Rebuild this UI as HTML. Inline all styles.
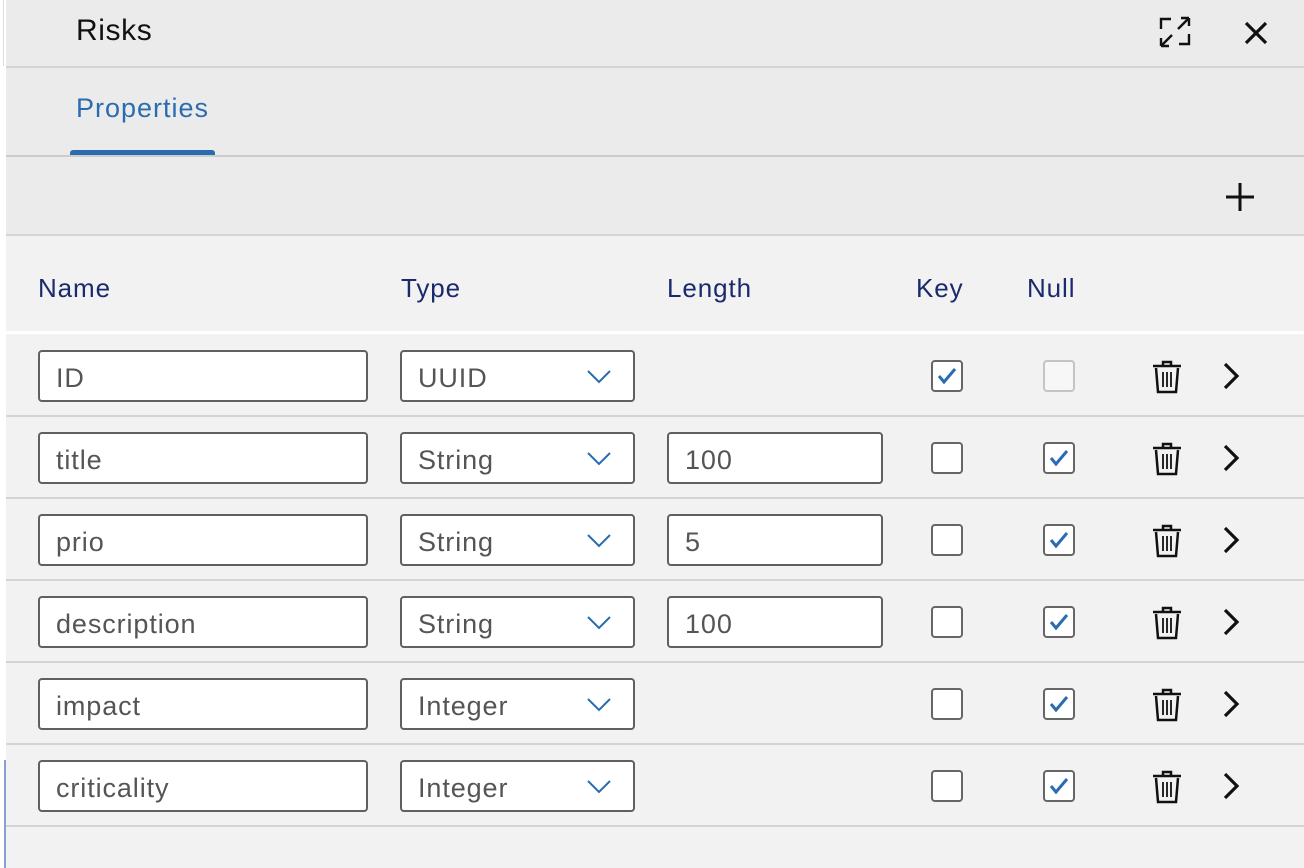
<!DOCTYPE html>
<html><head><meta charset="utf-8"><style>
*{margin:0;padding:0;box-sizing:border-box}
body{width:1304px;height:868px;background:#f2f2f2;font-family:"Liberation Sans",Arial,sans-serif;position:relative;overflow:hidden}
.a{position:absolute}
.inp{position:absolute;height:52px;border:2px solid #606060;border-radius:4px;background:#fff;font-size:27px;letter-spacing:0.9px;color:#555;padding-left:16px;line-height:52px}
.cb{position:absolute;width:32px;height:32px;border:2px solid #666;border-radius:4px;background:#fff}
.hd{position:absolute;top:273px;font-size:26px;letter-spacing:0.9px;color:#1a2a6c}
.ln{position:absolute;left:6px;right:0;height:2px;background:#d4d4d4}
</style></head><body>
<div class="a" style="left:0;top:0;width:6px;height:868px;background:#fff"></div>
<div class="a" style="left:0;top:0;width:4px;height:66px;border-right:1px solid #d8dde6"></div>
<div class="a" style="left:6px;top:0;right:0;height:156px;background:#ebebeb"></div>
<div class="a" style="left:76px;top:14px;font-size:30px;letter-spacing:0.6px;color:#111">Risks</div>
<svg class="a" style="left:1158px;top:15px" width="34" height="34" viewBox="0 0 34 34" fill="none" stroke="#111" stroke-width="2.4"><path d="M3 14V4h10M21 29h10V19M20 14L31 3M31 3h-8M31 3v8M14 20L3 31M3 31h8M3 31v-8"/></svg>
<svg class="a" style="left:1244px;top:21px" width="24" height="24" viewBox="0 0 24 24" stroke="#111" stroke-width="3.2"><path d="M2 2L22 22M22 2L2 22"/></svg>
<div class="ln" style="top:66px"></div>
<div class="a" style="left:76px;top:93px;font-size:27px;letter-spacing:1px;color:#2b6cb0">Properties</div>
<div class="a" style="left:70px;top:150px;width:145px;height:6px;background:#2b6cb0;border-radius:3px 3px 0 0"></div>
<div class="a" style="left:6px;right:0;top:155px;height:2px;background:#ccc;box-shadow:0 2px 3px rgba(0,0,0,.08)"></div>
<div class="a" style="left:6px;right:0;top:157px;height:78px;background:#ebebeb"></div>
<svg class="a" style="left:1225px;top:182px" width="30" height="30" viewBox="0 0 30 30" stroke="#111" stroke-width="3"><path d="M15 1V29M1 15H29"/></svg>
<div class="ln" style="top:234px"></div>
<div class="hd" style="left:38px">Name</div>
<div class="hd" style="left:401px">Type</div>
<div class="hd" style="left:667px">Length</div>
<div class="hd" style="left:916px">Key</div>
<div class="hd" style="left:1027px">Null</div>
<div class="a" style="left:6px;right:0;top:331px;height:3px;background:#fff"></div>
<div id="rows"></div>
<script>
const rows=[["ID","UUID","",1,0],["title","String","100",0,1],["prio","String","5",0,1],["description","String","100",0,1],["impact","Integer","",0,1],["criticality","Integer","",0,1]];
let h="";
const chk='<svg width="28" height="28" viewBox="0 0 28 28" style="position:absolute;left:0;top:0"><path d="M6 14l5 6L22 7" fill="none" stroke="#2b6cb0" stroke-width="3"/></svg>';
rows.forEach((r,i)=>{const t=334+i*82;
h+=`<div class="inp" style="left:38px;top:${t+16}px;width:330px">${r[0]}</div>`;
h+=`<div class="inp" style="left:400px;top:${t+16}px;width:235px">${r[1]}<svg style="position:absolute;right:22px;top:18px" width="24" height="14" viewBox="0 0 24 14"><path d="M1 1l11 11L23 1" fill="none" stroke="#2b6cb0" stroke-width="2"/></svg></div>`;
if(r[2])h+=`<div class="inp" style="left:667px;top:${t+16}px;width:216px">${r[2]}</div>`;
h+=`<div class="cb" style="left:931px;top:${t+26}px">${r[3]?chk:""}</div>`;
h+=`<div class="cb" style="left:1043px;top:${t+26}px;${i==0?'border-color:#c4c4c4;background:#f7f7f7':''}">${r[4]?chk:""}</div>`;
h+=`<svg class="a" style="left:1152px;top:${t+26}px" width="30" height="34" viewBox="0 0 30 34" fill="none" stroke="#111"><path d="M1 6H29" stroke-width="2.5"/><path d="M11 5V2h8v3" stroke-width="2.5"/><path d="M4 8l2 24h18l2-24" stroke-width="2.5"/><path d="M11 12v15M15 12v15M19 12v15" stroke-width="1.8"/></svg>`;
h+=`<svg class="a" style="left:1222px;top:${t+28}px" width="18" height="28" viewBox="0 0 18 28"><path d="M3 2l12 12L3 26" fill="none" stroke="#111" stroke-width="3.2"/></svg>`;
h+=`<div class="ln" style="top:${t+81}px"></div>`;});
document.getElementById("rows").innerHTML=h;
</script>
<div class="a" style="left:4px;top:760px;width:2px;height:108px;background:#8aa0d0"></div>
</body></html>
